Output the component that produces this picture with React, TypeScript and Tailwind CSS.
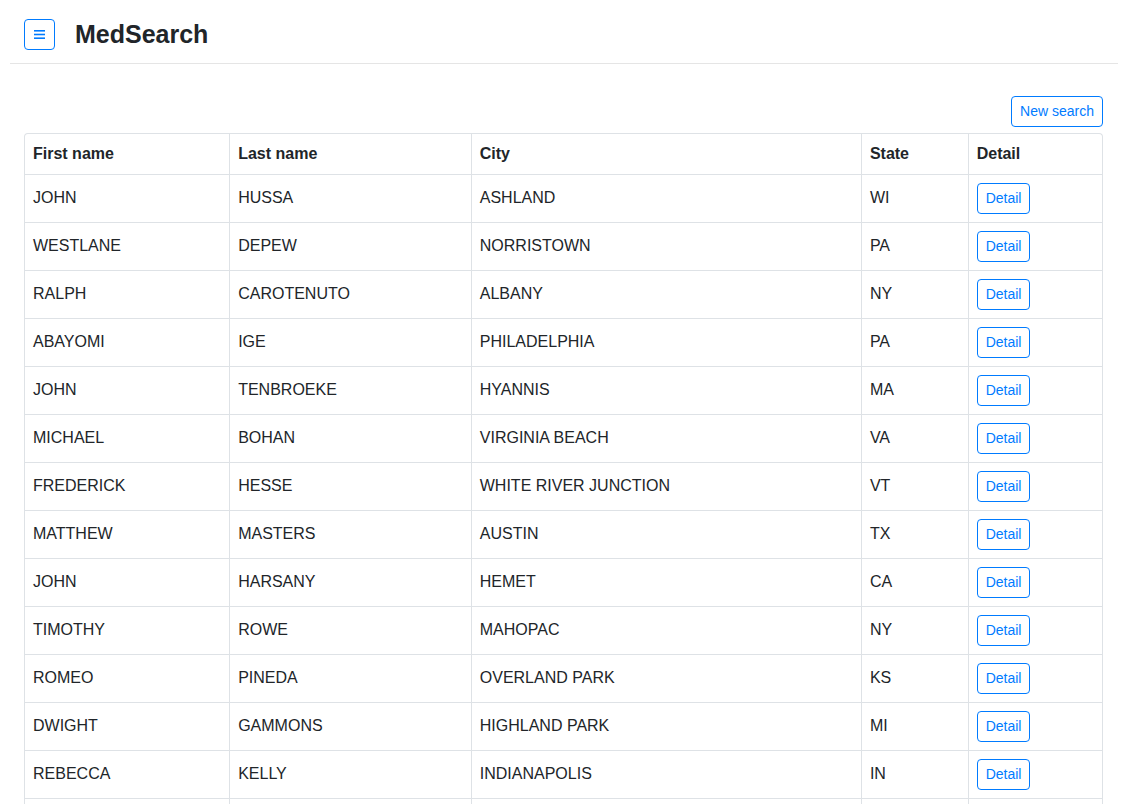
import React from 'react'

const rows = [
  ['JOHN', 'HUSSA', 'ASHLAND', 'WI'],
  ['WESTLANE', 'DEPEW', 'NORRISTOWN', 'PA'],
  ['RALPH', 'CAROTENUTO', 'ALBANY', 'NY'],
  ['ABAYOMI', 'IGE', 'PHILADELPHIA', 'PA'],
  ['JOHN', 'TENBROEKE', 'HYANNIS', 'MA'],
  ['MICHAEL', 'BOHAN', 'VIRGINIA BEACH', 'VA'],
  ['FREDERICK', 'HESSE', 'WHITE RIVER JUNCTION', 'VT'],
  ['MATTHEW', 'MASTERS', 'AUSTIN', 'TX'],
  ['JOHN', 'HARSANY', 'HEMET', 'CA'],
  ['TIMOTHY', 'ROWE', 'MAHOPAC', 'NY'],
  ['ROMEO', 'PINEDA', 'OVERLAND PARK', 'KS'],
  ['DWIGHT', 'GAMMONS', 'HIGHLAND PARK', 'MI'],
  ['REBECCA', 'KELLY', 'INDIANAPOLIS', 'IN'],
]

export default function App() {
  return (
    <div className="min-h-screen bg-white text-[#212529] font-['Liberation_Sans',Arial,sans-serif]">
      <header className="ml-[10px] mr-[22px] flex items-center border-b border-[#e5e5e5] pl-[14px] pt-[19px] pb-[13px]">
        <button className="flex h-[31px] w-[31px] items-center justify-center rounded-[4px] border border-[#007bff]">
          <svg width="11" height="9" viewBox="0 0 11 9">
            <rect x="0" y="0" width="11" height="1.6" fill="#007bff" />
            <rect x="0" y="3.7" width="11" height="1.6" fill="#007bff" />
            <rect x="0" y="7.4" width="11" height="1.6" fill="#007bff" />
          </svg>
        </button>
        <h1 className="ml-[20px] text-[25px] font-bold leading-none">MedSearch</h1>
      </header>

      <main className="ml-[24px] w-[1079px] pt-[32px]">
        <div className="flex justify-end">
          <button className="h-[31px] rounded-[4px] border border-[#007bff] px-[8px] text-[14px] text-[#007bff]">
            New search
          </button>
        </div>

        <div className="mt-[6px] overflow-hidden rounded-t-[4px] border border-[#dee2e6] border-b-0">
          <table className="w-full border-collapse text-[16px]">
            <colgroup>
              <col className="w-[205px]" />
              <col className="w-[242px]" />
              <col className="w-[391px]" />
              <col className="w-[107px]" />
              <col className="w-[134px]" />
            </colgroup>
            <thead>
              <tr className="h-[40px]">
                {['First name', 'Last name', 'City', 'State', 'Detail'].map((h, i) => (
                  <th
                    key={h}
                    className={`px-[8px] text-left font-bold ${i > 0 ? 'border-l border-[#dee2e6]' : ''}`}
                  >
                    {h}
                  </th>
                ))}
              </tr>
            </thead>
            <tbody>
              {rows.map((r, idx) => (
                <tr key={idx} className="h-[48px] border-t border-[#dee2e6]">
                  {r.map((c, i) => (
                    <td key={i} className={`px-[8px] ${i > 0 ? 'border-l border-[#dee2e6]' : ''}`}>
                      {c}
                    </td>
                  ))}
                  <td className="border-l border-[#dee2e6] px-[8px]">
                    <button className="h-[31px] rounded-[4px] border border-[#007bff] px-[8px] text-[14px] text-[#007bff]">
                      Detail
                    </button>
                  </td>
                </tr>
              ))}
              <tr className="h-[48px] border-t border-[#dee2e6]">
                <td />
                <td className="border-l border-[#dee2e6]" />
                <td className="border-l border-[#dee2e6]" />
                <td className="border-l border-[#dee2e6]" />
                <td className="border-l border-[#dee2e6]" />
              </tr>
            </tbody>
          </table>
        </div>
      </main>
    </div>
  )
}
